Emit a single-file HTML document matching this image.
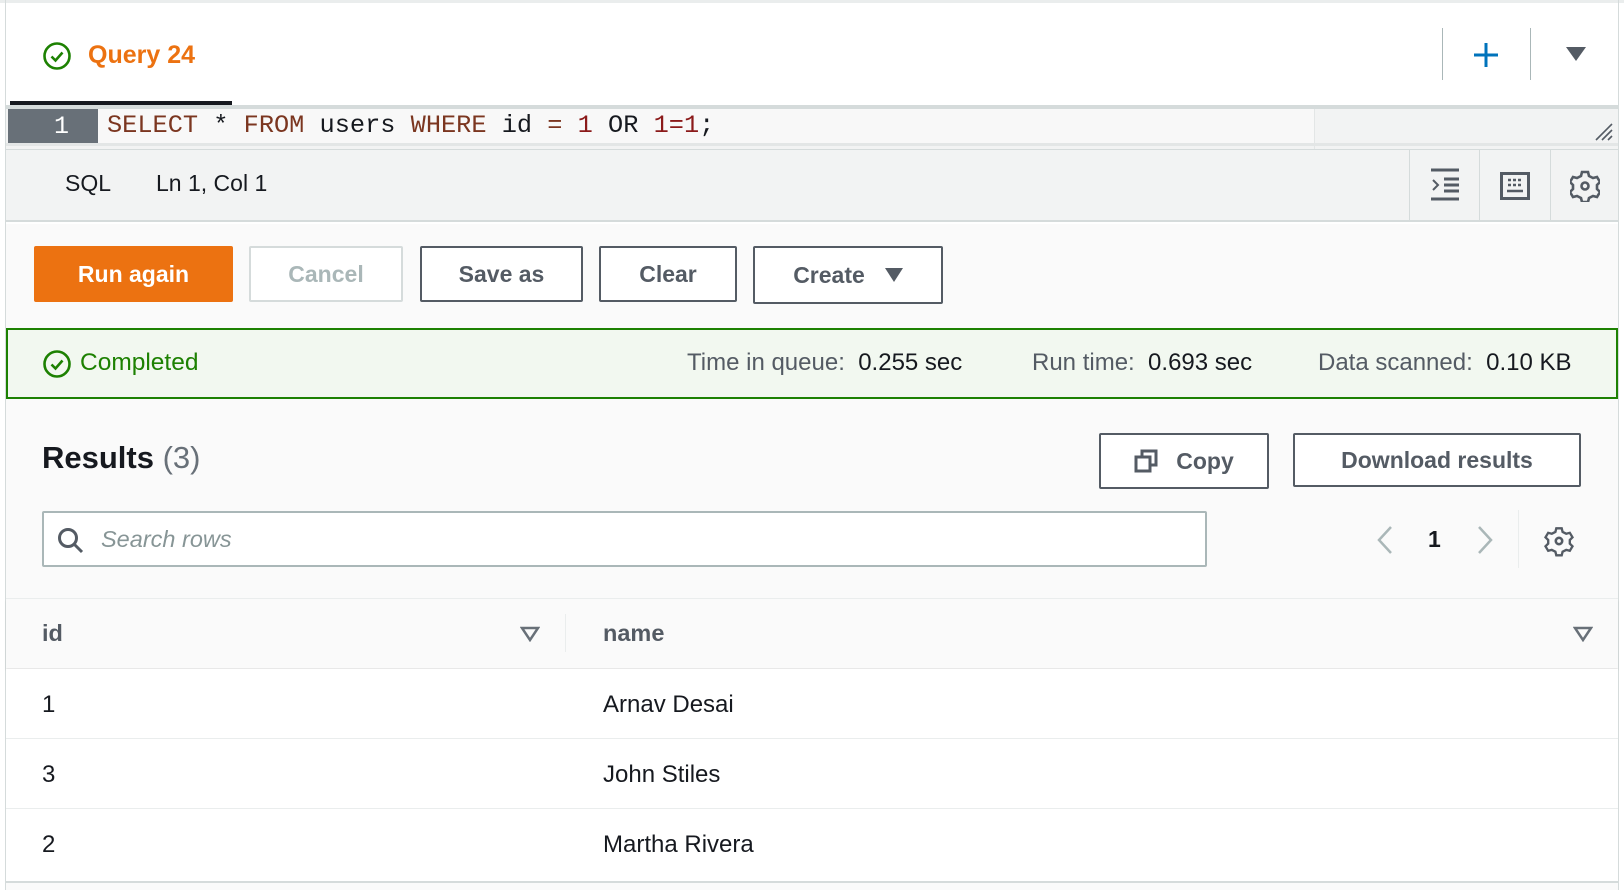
<!DOCTYPE html>
<html><head><meta charset="utf-8"><style>
*{box-sizing:border-box;margin:0;padding:0}
body{width:1624px;height:890px;background:#fff;font-family:"Liberation Sans",sans-serif;color:#16191f;position:relative;overflow:hidden}
.a{position:absolute}
.btn{position:absolute;border:2px solid #545b64;border-radius:2px;background:#fff;color:#545b64;font-weight:bold;font-size:23px;display:flex;align-items:center;justify-content:center}
.mono{font-family:"Liberation Mono",monospace}
</style></head><body>
<div class="a" style="left:0;top:0;width:1624px;height:3px;background:#eaeded"></div>
<div class="a" style="left:5px;top:0;width:1px;height:890px;background:#d5dbdb"></div>
<div class="a" style="left:1618px;top:0;width:1px;height:890px;background:#d5dbdb"></div>
<div class="a" style="left:6px;top:3px;width:1612px;height:102px;background:#fff"></div>
<svg class="a" style="left:42px;top:41px" width="30" height="30" viewBox="0 0 30 30"><circle cx="15" cy="15" r="12.5" fill="none" stroke="#1d8102" stroke-width="2.6"/><path d="M9.5 15.5l4 4 7-8" fill="none" stroke="#1d8102" stroke-width="2.6"/></svg>
<div class="a" style="left:88px;top:41px;font-size:25px;font-weight:bold;color:#ec7211">Query 24</div>
<div class="a" style="left:10px;top:101px;width:222px;height:5px;background:#16191f"></div>
<div class="a" style="left:1442px;top:28px;width:1px;height:52px;background:#aab7b8"></div>
<div class="a" style="left:1530px;top:28px;width:1px;height:52px;background:#aab7b8"></div>
<svg class="a" style="left:1472px;top:41px" width="28" height="28"><path d="M14 2v24M2 14h24" stroke="#0073bb" stroke-width="3"/></svg>
<svg class="a" style="left:1565px;top:46px" width="22" height="16"><path d="M1 1h20L11 15z" fill="#545b64"/></svg>
<div class="a" style="left:6px;top:105px;width:1612px;height:4px;background:#d5dbdb"></div>
<div class="a" style="left:6px;top:109px;width:1612px;height:40px;background:#f2f3f3"></div>
<div class="a mono" style="left:8px;top:109px;width:90px;height:35px;background:#687078;color:#fff;font-size:25px;line-height:35px;padding-left:46px">1</div>
<div class="a" style="left:98px;top:109px;width:1217px;height:35px;background:#f8f8f8"></div>
<div class="a" style="left:1314px;top:109px;width:1px;height:40px;background:#e3e6e6"></div>
<div class="a mono" style="left:107px;top:111px;font-size:25.3px;color:#16191f;white-space:pre"><span style="color:#7b3620">SELECT</span> * <span style="color:#7b3620">FROM</span> users <span style="color:#7b3620">WHERE</span> id <span style="color:#7b3620">=</span> <span style="color:#8b1a1a">1</span> OR <span style="color:#8b1a1a">1=1</span>;</div>
<svg class="a" style="left:1594px;top:122px" width="20" height="20"><path d="M2 18L18 2M8 18L18 8M14 18l4-4" stroke="#545b64" stroke-width="1.6"/></svg>
<div class="a" style="left:6px;top:143px;width:1612px;height:3px;background:#e3e6e6"></div>
<div class="a" style="left:6px;top:149px;width:1612px;height:73px;background:#f2f3f3;border-top:1px solid #d5dbdb;border-bottom:2px solid #d5dbdb"></div>
<div class="a" style="left:65px;top:170px;font-size:23px">SQL</div>
<div class="a" style="left:156px;top:170px;font-size:23px">Ln 1, Col 1</div>
<div class="a" style="left:1409px;top:150px;width:1px;height:72px;background:#d5dbdb"></div>
<div class="a" style="left:1479px;top:150px;width:1px;height:72px;background:#d5dbdb"></div>
<div class="a" style="left:1550px;top:150px;width:1px;height:72px;background:#d5dbdb"></div>
<svg class="a" style="left:1430px;top:168px" width="30" height="34"><path d="M1 2h28M1 31h28M14 11h15M14 17h15M14 23h15" stroke="#545b64" stroke-width="3"/><path d="M3 12l5 5-5 5" fill="none" stroke="#545b64" stroke-width="2"/></svg>
<svg class="a" style="left:1500px;top:172px" width="30" height="28"><rect x="1.5" y="1.5" width="27" height="25" fill="none" stroke="#545b64" stroke-width="3"/><path d="M8 8h3M13 8h3M18 8h3M8 13h3M13 13h3M18 13h3M7 19h16" stroke="#545b64" stroke-width="2.5"/></svg>
<svg class="a" style="left:1570px;top:170px" width="30" height="32" viewBox="0 0 30 32"><path d="M12 2h6l1 4 4 2 4-1 3 5-3 3v4l3 3-3 5-4-1-4 2-1 4h-6l-1-4-4-2-4 1-3-5 3-3v-4L0 12l3-5 4 1 4-2z" fill="none" stroke="#545b64" stroke-width="2.6"/><circle cx="15" cy="16" r="3.5" fill="none" stroke="#545b64" stroke-width="2.6"/></svg>
<div class="a" style="left:6px;top:224px;width:1612px;height:666px;background:#fafafa"></div>
<div class="btn" style="left:34px;top:246px;width:199px;height:56px;background:#ec7211;border-color:#ec7211;color:#fff">Run again</div>
<div class="btn" style="left:249px;top:246px;width:154px;height:56px;border-color:#d5dbdb;color:#aab7b8">Cancel</div>
<div class="btn" style="left:420px;top:246px;width:163px;height:56px">Save as</div>
<div class="btn" style="left:599px;top:246px;width:138px;height:56px">Clear</div>
<div class="btn" style="left:753px;top:246px;width:190px;height:58px">Create<svg style="margin-left:20px" width="18" height="14"><path d="M0 0h18L9 14z" fill="#545b64"/></svg></div>
<div class="a" style="left:6px;top:328px;width:1612px;height:71px;background:#f2f8f0;border:2px solid #1d8102"></div>
<svg class="a" style="left:42px;top:349px" width="30" height="30" viewBox="0 0 30 30"><circle cx="15" cy="15" r="12.5" fill="none" stroke="#1d8102" stroke-width="2.6"/><path d="M9.5 15.5l4 4 7-8" fill="none" stroke="#1d8102" stroke-width="2.6"/></svg>
<div class="a" style="left:80px;top:349px;font-size:24.5px;color:#1d8102">Completed</div>
<div class="a" style="left:687px;top:349px;font-size:24px;color:#545b64;white-space:pre">Time in queue:  <span style="color:#16191f">0.255 sec</span></div>
<div class="a" style="left:1032px;top:349px;font-size:24px;color:#545b64;white-space:pre">Run time:  <span style="color:#16191f">0.693 sec</span></div>
<div class="a" style="left:1318px;top:349px;font-size:24px;color:#545b64;white-space:pre">Data scanned:  <span style="color:#16191f">0.10 KB</span></div>
<div class="a" style="left:42px;top:440px;font-size:31px;font-weight:bold">Results <span style="font-weight:normal;color:#687078">(3)</span></div>
<div class="btn" style="left:1099px;top:433px;width:170px;height:56px"><svg width="26" height="24" style="margin-right:16px"><rect x="2" y="8" width="14" height="14" fill="none" stroke="#545b64" stroke-width="3"/><path d="M8 8V2h14v14h-6" fill="none" stroke="#545b64" stroke-width="3"/></svg>Copy</div>
<div class="btn" style="left:1293px;top:433px;width:288px;height:54px">Download results</div>
<div class="a" style="left:42px;top:511px;width:1165px;height:56px;background:#fff;border:2px solid #aab7b8;border-radius:2px"></div>
<svg class="a" style="left:57px;top:527px" width="28" height="28"><circle cx="11" cy="11" r="8.5" fill="none" stroke="#545b64" stroke-width="3"/><path d="M17 17l8 8" stroke="#545b64" stroke-width="3"/></svg>
<div class="a" style="left:101px;top:526px;font-size:23.5px;font-style:italic;color:#879596">Search rows</div>
<svg class="a" style="left:1375px;top:525px" width="20" height="30"><path d="M16 2L4 15l12 13" fill="none" stroke="#aab7b8" stroke-width="2.5"/></svg>
<div class="a" style="left:1428px;top:526px;font-size:23px;font-weight:bold">1</div>
<svg class="a" style="left:1475px;top:525px" width="20" height="30"><path d="M4 2l12 13L4 28" fill="none" stroke="#aab7b8" stroke-width="2.5"/></svg>
<div class="a" style="left:1518px;top:510px;width:1px;height:58px;background:#eaeded"></div>
<svg class="a" style="left:1544px;top:525px" width="30" height="32" viewBox="0 0 30 32"><path d="M12 2h6l1 4 4 2 4-1 3 5-3 3v4l3 3-3 5-4-1-4 2-1 4h-6l-1-4-4-2-4 1-3-5 3-3v-4L0 12l3-5 4 1 4-2z" fill="none" stroke="#545b64" stroke-width="2.6" transform="translate(1.5 1.5) scale(.9)"/><circle cx="15" cy="16" r="3.2" fill="none" stroke="#545b64" stroke-width="2.6"/></svg>
<div class="a" style="left:6px;top:598px;width:1612px;height:1px;background:#eaeded"></div>
<div class="a" style="left:6px;top:599px;width:1612px;height:69px;background:#fafafa;box-shadow:0 2px 2px rgba(0,0,0,.08)"></div>
<div class="a" style="left:42px;top:620px;font-size:23.5px;font-weight:bold;color:#545b64">id</div>
<svg class="a" style="left:520px;top:626px" width="20" height="16"><path d="M2 2h16L10 14z" fill="none" stroke="#687078" stroke-width="2.5"/></svg>
<div class="a" style="left:565px;top:614px;width:1px;height:38px;background:#eaeded"></div>
<div class="a" style="left:603px;top:620px;font-size:23.5px;font-weight:bold;color:#545b64">name</div>
<svg class="a" style="left:1573px;top:626px" width="20" height="16"><path d="M2 2h16L10 14z" fill="none" stroke="#687078" stroke-width="2.5"/></svg>
<div class="a" style="left:6px;top:669px;width:1612px;height:212px;background:#fff"></div>
<div class="a" style="left:6px;top:738px;width:1612px;height:1px;background:#eaeded"></div>
<div class="a" style="left:6px;top:808px;width:1612px;height:1px;background:#eaeded"></div>
<div class="a" style="left:6px;top:881px;width:1612px;height:2px;background:#d5dbdb"></div>
<div class="a" style="left:42px;top:691px;font-size:24px">1</div>
<div class="a" style="left:603px;top:691px;font-size:24px">Arnav Desai</div>
<div class="a" style="left:42px;top:761px;font-size:24px">3</div>
<div class="a" style="left:603px;top:761px;font-size:24px">John Stiles</div>
<div class="a" style="left:42px;top:831px;font-size:24px">2</div>
<div class="a" style="left:603px;top:831px;font-size:24px">Martha Rivera</div>
</body></html>
